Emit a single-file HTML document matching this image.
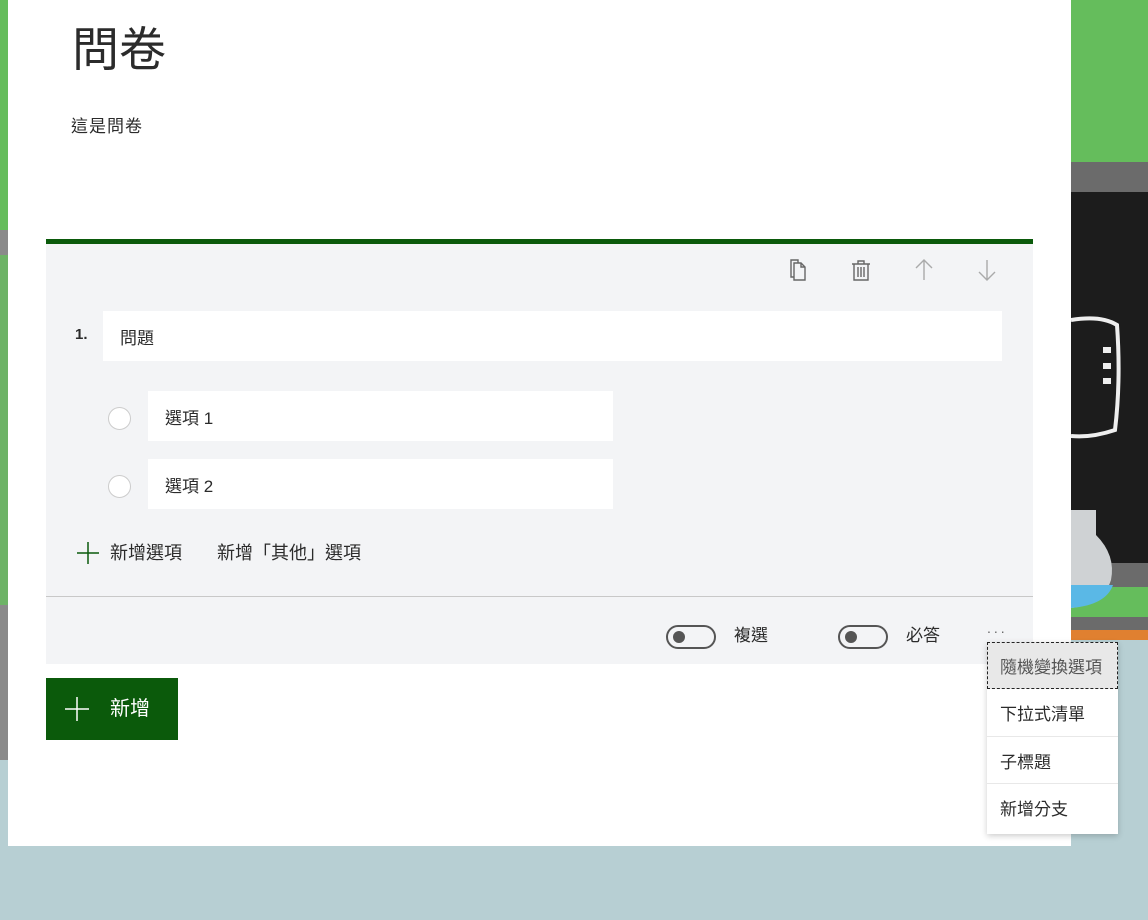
<!DOCTYPE html>
<html><head><meta charset="utf-8"><style>
*{margin:0;padding:0;box-sizing:border-box}
body{width:1148px;height:920px;position:relative;overflow:hidden;background:#b7cfd3;font-family:"Liberation Sans","Noto Sans CJK TC",sans-serif;color:#2b2b2b}
.a{position:absolute}
</style></head><body>
<div class="a" style="left:1071px;top:0;width:77px;height:162px;background:#65bd5c"></div>
<div class="a" style="left:1071px;top:162px;width:77px;height:30px;background:#6b6b6b"></div>
<div class="a" style="left:1071px;top:192px;width:77px;height:371px;background:#1c1c1c"></div>
<div class="a" style="left:1071px;top:563px;width:77px;height:24px;background:#6b6b6b"></div>
<div class="a" style="left:1071px;top:587px;width:77px;height:30px;background:#65bd5c"></div>
<div class="a" style="left:1071px;top:617px;width:77px;height:13px;background:#6b6b6b"></div>
<div class="a" style="left:1071px;top:630px;width:77px;height:10px;background:#e08030"></div>
<svg class="a" style="left:1071px;top:300px" width="77" height="320">
<path d="M0 20 Q30 15 46 25 Q50 80 44 130 Q20 138 0 136" fill="none" stroke="#eee" stroke-width="4"/>
<rect x="32" y="47" width="8" height="6" fill="#eee"/><rect x="32" y="63" width="8" height="6" fill="#eee"/><rect x="32" y="78" width="8" height="6" fill="#eee"/>
<path d="M0 210 H25 V235 Q45 255 40 280 Q32 305 0 308 Z" fill="#cfd2d4"/>
<path d="M0 285 H42 Q35 305 0 308 Z" fill="#5ab8e6"/>
</svg>
<div class="a" style="left:0;top:0;width:8px;height:230px;background:#65bd5c"></div>
<div class="a" style="left:0;top:230px;width:8px;height:530px;background:#8a8a8a"></div>
<div class="a" style="left:0;top:255px;width:8px;height:350px;background:#65bd5c;opacity:.8"></div>
<div class="a" style="left:8px;top:0;width:1063px;height:846px;background:#fff"></div>
<div class="a" style="left:72px;top:20px;font-size:47px;line-height:60px">問卷</div>
<div class="a" style="left:71px;top:115px;font-size:17px;line-height:24px;letter-spacing:1px">這是問卷</div>
<div class="a" style="left:46px;top:239px;width:987px;height:5px;background:#0b5a0b"></div>
<div class="a" style="left:46px;top:244px;width:987px;height:420px;background:#f3f4f6"></div>
<div class="a" style="left:46px;top:596px;width:987px;height:1px;background:#c8c8c8"></div>
<svg class="a" style="left:780px;top:255px" width="230" height="32" fill="none" stroke="#666" stroke-width="1.4">
<path d="M14 8h7l4 4v13h-11z"/><path d="M21 8v4h4"/><path d="M14 22h-3V5h7v3"/>
<path d="M72 9h18 M78 9V6h6v3 M74 9v16h14V9 M78 12v10 M81 12v10 M84 12v10"/>
<path d="M144 25V5 M136 13l8-8 8 8" stroke="#aaa"/>
<path d="M207 5v20 M199 17l8 8 8-8" stroke="#aaa"/>
</svg>
<div class="a" style="left:75px;top:326px;font-size:15px;font-weight:bold">1.</div>
<div class="a" style="left:103px;top:311px;width:899px;height:50px;background:#fff;font-size:17px;padding:13px 17px">問題</div>
<div class="a" style="left:108px;top:407px;width:23px;height:23px;border:1px solid #ccc;border-radius:50%;background:#fff"></div>
<div class="a" style="left:148px;top:391px;width:465px;height:50px;background:#fff;font-size:17px;padding:13px 17px">選項 1</div>
<div class="a" style="left:108px;top:475px;width:23px;height:23px;border:1px solid #ccc;border-radius:50%;background:#fff"></div>
<div class="a" style="left:148px;top:459px;width:465px;height:50px;background:#fff;font-size:17px;padding:13px 17px">選項 2</div>
<svg class="a" style="left:76px;top:541px" width="24" height="24" stroke="#0b5a0b" stroke-width="1.5"><path d="M12 1v22M1 12h22"/></svg>
<div class="a" style="left:110px;top:541px;font-size:18px;line-height:24px">新增選項</div>
<div class="a" style="left:217px;top:541px;font-size:18px;line-height:24px">新增「其他」選項</div>
<div class="a" style="left:666px;top:625px;width:50px;height:24px;border:2px solid #555;border-radius:12px"></div>
<div class="a" style="left:673px;top:631px;width:12px;height:12px;background:#555;border-radius:50%"></div>
<div class="a" style="left:734px;top:625px;font-size:17px;line-height:22px">複選</div>
<div class="a" style="left:838px;top:625px;width:50px;height:24px;border:2px solid #555;border-radius:12px"></div>
<div class="a" style="left:845px;top:631px;width:12px;height:12px;background:#555;border-radius:50%"></div>
<div class="a" style="left:906px;top:625px;font-size:17px;line-height:22px">必答</div>
<div class="a" style="left:987px;top:620px;font-size:14px;color:#666;letter-spacing:3px">...</div>
<div class="a" style="left:46px;top:678px;width:132px;height:62px;background:#0b5a0b"></div>
<svg class="a" style="left:64px;top:696px" width="26" height="26" stroke="#fff" stroke-width="1.5"><path d="M13 1v24M1 13h24"/></svg>
<div class="a" style="left:110px;top:697px;font-size:20px;color:#fff;line-height:24px">新增</div>
<div class="a" style="left:987px;top:642px;width:131px;height:192px;background:#fff;box-shadow:0 2px 6px rgba(0,0,0,.2)"></div>
<div class="a" style="left:987px;top:642px;width:131px;height:47px;background:#e8e8e8;border:1px dashed #222;font-size:17px;color:#555;padding:10px 12px">隨機變換選項</div>
<div class="a" style="left:987px;top:689px;width:131px;height:48px;border-bottom:1px solid #e8e8e8;font-size:17px;padding:11px 13px">下拉式清單</div>
<div class="a" style="left:987px;top:737px;width:131px;height:47px;border-bottom:1px solid #e8e8e8;font-size:17px;padding:11px 13px">子標題</div>
<div class="a" style="left:987px;top:784px;width:131px;height:48px;font-size:17px;padding:11px 13px">新增分支</div>
</body></html>
